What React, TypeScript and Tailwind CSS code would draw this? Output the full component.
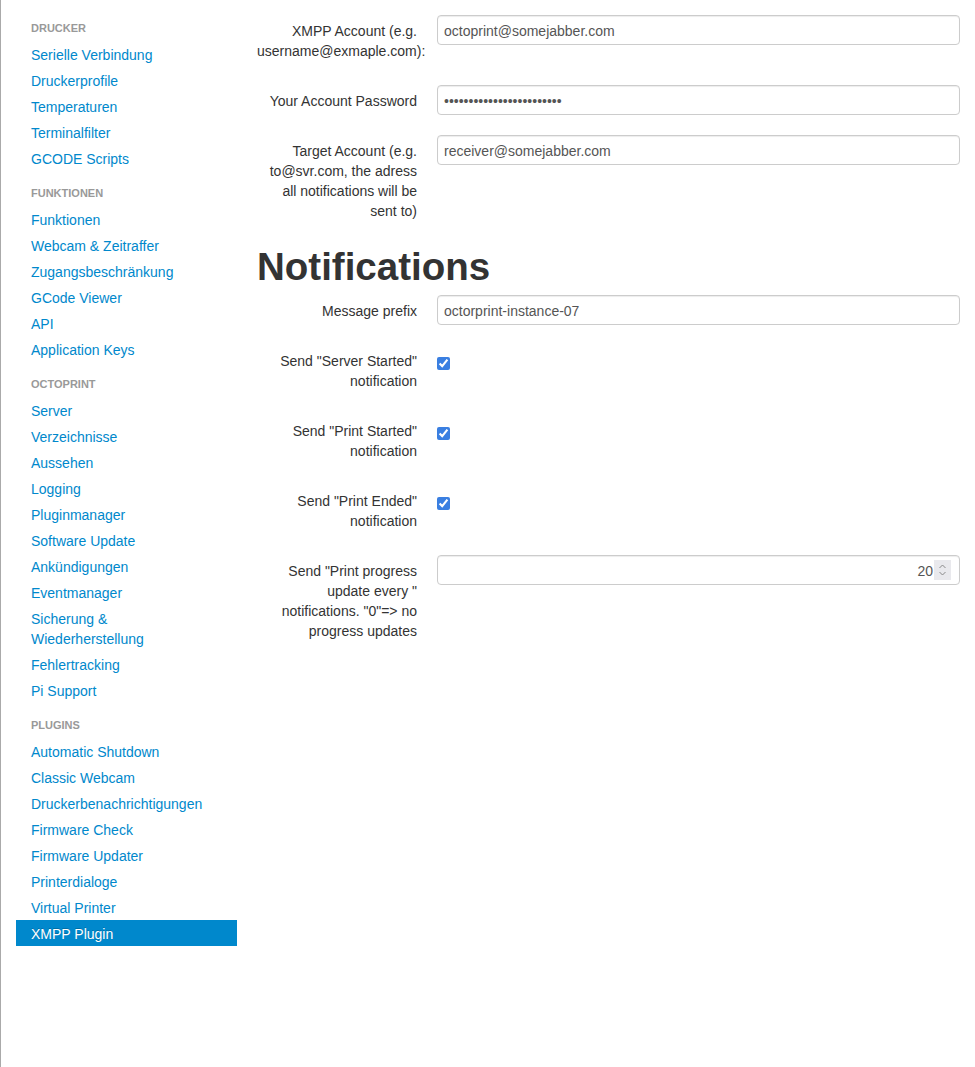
import React from "react";

const sections: { title: string; items: string[] }[] = [
  { title: "Drucker", items: ["Serielle Verbindung", "Druckerprofile", "Temperaturen", "Terminalfilter", "GCODE Scripts"] },
  { title: "Funktionen", items: ["Funktionen", "Webcam & Zeitraffer", "Zugangsbeschränkung", "GCode Viewer", "API", "Application Keys"] },
  {
    title: "OctoPrint",
    items: [
      "Server",
      "Verzeichnisse",
      "Aussehen",
      "Logging",
      "Pluginmanager",
      "Software Update",
      "Ankündigungen",
      "Eventmanager",
      "Sicherung & Wiederherstellung",
      "Fehlertracking",
      "Pi Support",
    ],
  },
  {
    title: "Plugins",
    items: [
      "Automatic Shutdown",
      "Classic Webcam",
      "Druckerbenachrichtigungen",
      "Firmware Check",
      "Firmware Updater",
      "Printerdialoge",
      "Virtual Printer",
      "XMPP Plugin",
    ],
  },
];

function Label({ children }: { children: React.ReactNode }) {
  return (
    <label className="block w-[160px] shrink-0 pt-[6px] mb-[4px] text-right leading-5 text-[14px] text-[#333]">
      {children}
    </label>
  );
}

function TextInput({ value, type = "text" }: { value: string; type?: string }) {
  return (
    <input
      type={type}
      readOnly
      value={value}
      className="block w-full h-[30px] px-[6px] pt-[5px] pb-[3px] border border-[#ccc] rounded-[4px] text-[14px] leading-5 text-[#555] bg-white outline-none shadow-[inset_0_1px_1px_rgba(0,0,0,0.075)]"
      style={{ fontFamily: "inherit" }}
    />
  );
}

function Group({ label, children }: { label: React.ReactNode; children: React.ReactNode }) {
  return (
    <div className="flex mb-[20px]">
      <Label>{label}</Label>
      <div className="ml-[20px] flex-1">{children}</div>
    </div>
  );
}

function Check() {
  return (
    <input
      type="checkbox"
      defaultChecked
      className="block w-[13px] h-[13px] m-0 mt-[12px] accent-[#3a7fe1]"
    />
  );
}

export default function App() {
  return (
    <div
      className="flex min-h-[1067px] bg-white border-l border-[#aaa]"
      style={{ fontFamily: '"Liberation Sans", Arial, Helvetica, sans-serif' }}
    >
      <nav className="w-[221px] shrink-0 ml-[15px] pt-[15px]">
        <ul>
          {sections.map((s, si) => (
            <React.Fragment key={s.title}>
              <li
                className={`px-[15px] py-[3px] leading-5 text-[11px] font-bold uppercase text-[#999] ${
                  si > 0 ? "mt-[9px]" : ""
                }`}
                style={{ textShadow: "0 1px 0 rgba(255,255,255,0.5)" }}
              >
                {s.title}
              </li>
              {s.items.map((it) => {
                const active = it === "XMPP Plugin";
                return (
                  <li key={it}>
                    <a
                      className={`block px-[15px] pt-[4px] pb-[2px] leading-5 text-[14px] ${
                        active ? "bg-[#0088cc] text-white" : "text-[#0088cc]"
                      }`}
                      style={active ? { textShadow: "0 -1px 0 rgba(0,0,0,0.2)" } : undefined}
                    >
                      {it}
                    </a>
                  </li>
                );
              })}
            </React.Fragment>
          ))}
        </ul>
      </nav>

      <main className="ml-[20px] w-[703px] pt-[15px]">
        <Group label={<>XMPP Account (e.g. username@exmaple.com):</>}>
          <TextInput value="octoprint@somejabber.com" />
        </Group>
        <Group label="Your Account Password">
          <TextInput type="password" value="xxxxxxxxxxxxxxxxxxxxxxxx" />
        </Group>
        <Group label="Target Account (e.g. to@svr.com, the adress all notifications will be sent to)">
          <TextInput value="receiver@somejabber.com" />
        </Group>

        <h1 className="text-[38.5px] leading-[40px] pt-[2px] font-bold text-[#333] mb-[8px]">Notifications</h1>

        <Group label="Message prefix">
          <TextInput value="octorprint-instance-07" />
        </Group>
        <Group label={'Send "Server Started" notification'}>
          <Check />
        </Group>
        <Group label={'Send "Print Started" notification'}>
          <Check />
        </Group>
        <Group label={'Send "Print Ended" notification'}>
          <Check />
        </Group>
        <Group label={'Send "Print progress update every " notifications. "0"=> no progress updates'}>
          <div className="flex items-center justify-end w-full h-[30px] pl-[6px] pr-[8px] border border-[#ccc] rounded-[4px] bg-white text-[14px] text-[#555] shadow-[inset_0_1px_1px_rgba(0,0,0,0.075)]">
            <span className="leading-5 pt-[2px]">20</span>
            <span className="ml-[1px] flex flex-col items-center justify-center w-[17px] h-[20px] bg-[#e9e9ed]">
              <svg width="9" height="16" viewBox="0 0 9 16" fill="none" stroke="#8a8a8a" strokeWidth="1">
                <path d="M1.5 6 L4.5 3 L7.5 6" />
                <path d="M1.5 10 L4.5 13 L7.5 10" />
              </svg>
            </span>
          </div>
        </Group>
      </main>
    </div>
  );
}
